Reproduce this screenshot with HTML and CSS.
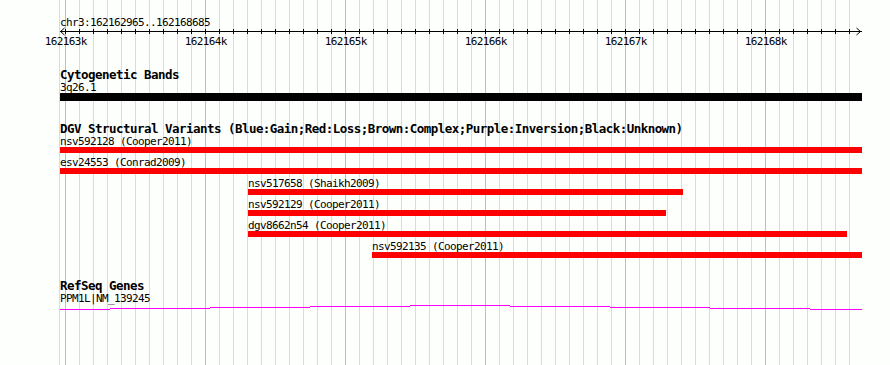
FILE: index.html
```html
<!DOCTYPE html>
<html lang="en">
<head>
<meta charset="UTF-8">
<meta name="viewport" content="width=device-width, initial-scale=1.0">
<title>chr3:162162965..162168685</title>
<link rel="stylesheet" href="styles.css">
</head>
<body>

<div class="panel">
    <svg class="grid" id="grid" width="890" height="365"></svg>
    <svg class="ruler" id="ruler" width="890" height="47"></svg>

    <div class="track">
        <div class="track-title">Cytogenetic Bands</div>
        <div class="feature" data-start="162100000" data-end="162300000">
            <div class="feature-label">3q26.1</div>
            <div class="bar bar-band"></div>
        </div>
    </div>

    <div class="track">
        <div class="track-title">DGV Structural Variants (Blue:Gain;Red:Loss;Brown:Complex;Purple:Inversion;Black:Unknown)</div>
        <div class="feature" data-start="162100000" data-end="162300000">
            <div class="feature-label">nsv592128 (Cooper2011)</div>
            <div class="bar bar-loss"></div>
        </div>
        <div class="feature" data-start="162100000" data-end="162300000">
            <div class="feature-label">esv24553 (Conrad2009)</div>
            <div class="bar bar-loss"></div>
        </div>
        <div class="feature" data-start="162164308" data-end="162167415">
            <div class="feature-label">nsv517658 (Shaikh2009)</div>
            <div class="bar bar-loss"></div>
        </div>
        <div class="feature" data-start="162164308" data-end="162167294">
            <div class="feature-label">nsv592129 (Cooper2011)</div>
            <div class="bar bar-loss"></div>
        </div>
        <div class="feature" data-start="162164308" data-end="162168586">
            <div class="feature-label">dgv8662n54 (Cooper2011)</div>
            <div class="bar bar-loss"></div>
        </div>
        <div class="feature" data-start="162165194" data-end="162300000">
            <div class="feature-label">nsv592135 (Cooper2011)</div>
            <div class="bar bar-loss"></div>
        </div>
    </div>

    <div class="track">
        <div class="track-title">RefSeq Genes</div>
        <div class="feature" data-start="162100000" data-end="162300000">
            <div class="feature-label">PPM1L|NM_139245</div>
            <svg class="transcript" id="transcript" height="6"></svg>
        </div>
    </div>
</div>

<script>
    // visible region and where it lands in the panel
    var START = 162162965;
    var END = 162168685;
    var LEFT = 60;
    var RIGHT = 861;
    var scale = (RIGHT - LEFT) / (END - START);
    var NS = 'http://www.w3.org/2000/svg';

    function toX(bp) {
        return Math.round(LEFT + (bp - START) * scale);
    }

    function el(tag, attrs, parent) {
        var node = document.createElementNS(NS, tag);
        for (var k in attrs) node.setAttribute(k, attrs[k]);
        parent.appendChild(node);
        return node;
    }

    var ruler = document.getElementById('ruler');
    var grid = document.getElementById('grid');

    // Ruler: title, line and arrows
    el('text', { x: LEFT, y: 26 }, ruler).textContent = 'chr3:' + START + '..' + END;
    el('rect', { x: LEFT, y: 31, width: RIGHT - LEFT + 1, height: 1 }, ruler);
    el('polyline', { points: '64.5,28 60.5,31.5 64.5,35', 'class': 'arrow' }, ruler);
    el('polyline', { points: '856.5,28 860.5,31.5 856.5,35', 'class': 'arrow' }, ruler);

    // Grid line at the panel edge, then ticks + grid lines every 100 bp
    el('rect', { x: LEFT - 1, y: 0, width: 1, height: 365, 'class': 'minor' }, grid);
    for (var bp = Math.ceil(START / 100) * 100; bp <= END; bp += 100) {
        var x = toX(bp);
        var major = bp % 1000 === 0;
        el('rect', { x: x, y: 0, width: 1, height: 365, 'class': major ? 'major' : 'minor' }, grid);
        el('rect', { x: x, y: 29, width: 1, height: 5 }, ruler);
        if (major) {
            el('text', { x: x + 0.8, y: 45, 'text-anchor': 'middle' }, ruler).textContent = (bp / 1000) + 'k';
        }
    }

    // Features: place each one by its genomic coordinates, clipped to the panel
    var features = document.querySelectorAll('.feature');
    for (var i = 0; i < features.length; i++) {
        var f = features[i];
        var x1 = Math.max(LEFT, toX(+f.dataset.start));
        var x2 = Math.min(RIGHT + 1, toX(+f.dataset.end));
        f.style.marginLeft = x1 + 'px';
        f.style.width = (x2 - x1) + 'px';
    }

    // Transcript line for PPM1L, drawn in steps across the window
    var transcript = document.getElementById('transcript');
    transcript.setAttribute('width', RIGHT + 1 - LEFT);
    for (var s = 0; s <= 8; s++) {
        var sx1 = s === 0 ? LEFT : 10 + 100 * s;
        var sx2 = s === 8 ? RIGHT + 1 : 110 + 100 * s;
        el('rect', { x: sx1 - LEFT, y: 1 + Math.abs(4 - s), width: sx2 - sx1, height: 1 }, transcript);
    }
</script>
</body>
</html>
```

FILE: styles.css
```css
body {
    margin: 0;
    padding: 0;
    background: #fff;
}

.panel {
    position: relative;
    z-index: 0;
    width: 890px;
    height: 365px;
    overflow: hidden;
    color: #000;
    font-family: "DejaVu Sans Mono", monospace;
    background: #fdfffd;
}

/* grid lines behind the tracks: one every 100 bp, darker every 1 kb */
.grid {
    position: absolute;
    z-index: -1;
    top: 0;
    left: 0;
    shape-rendering: crispEdges;
}

.grid .minor {
    fill: #afeeee;
}

.grid .major {
    fill: #87cefa;
}

.ruler {
    display: block;
    shape-rendering: crispEdges;
}

.ruler text {
    font-family: "DejaVu Sans Mono", monospace;
    font-size: 11px;
    letter-spacing: -0.62px;
    fill: #000;
}

.ruler rect {
    fill: #000;
}

.ruler .arrow {
    fill: none;
    stroke: #000;
    stroke-width: 1;
    shape-rendering: auto;
}

.track {
    margin-top: 22px;
}

.track-title {
    height: 11px;
    line-height: 11px;
    margin-bottom: 2px;
    padding-left: 60px;
    font-size: 12.5px;
    letter-spacing: -0.53px;
    font-weight: bold;
    white-space: nowrap;
}

.feature + .feature {
    margin-top: 4px;
}

.feature-label {
    height: 11px;
    line-height: 11px;
    font-size: 11px;
    letter-spacing: -0.62px;
    white-space: nowrap;
}

.bar {
    height: 6px;
}

.bar-loss {
    background: #ff0000;
}

.bar-band {
    height: 8px;
    background: #000;
}

.transcript {
    display: block;
    fill: #ff00ff;
    shape-rendering: crispEdges;
}
```
